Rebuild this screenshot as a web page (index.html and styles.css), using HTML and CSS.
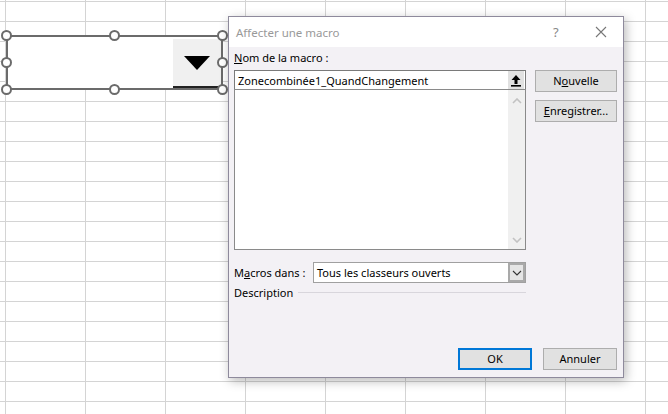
FILE: index.html
```html
<!DOCTYPE html>
<html lang="fr">
<head>
<meta charset="utf-8">
<title>Affecter une macro</title>
<link rel="stylesheet" href="styles.css">
</head>
<body>
<div class="sheet">
  <div class="shape">
    <div class="combo">
      <div class="combo-field"></div>
      <div class="combo-btn">
        <svg width="26" height="14" viewBox="0 0 26 14"><polygon points="0,0 26,0 13,14" fill="#000"/></svg>
      </div>
    </div>
    <span class="handle h-tl"></span>
    <span class="handle h-tm"></span>
    <span class="handle h-tr"></span>
    <span class="handle h-ml"></span>
    <span class="handle h-mr"></span>
    <span class="handle h-bl"></span>
    <span class="handle h-bm"></span>
    <span class="handle h-br"></span>
  </div>

  <div class="dialog">
    <div class="titlebar">
      <span class="title">Affecter une macro</span>
      <span class="help">?</span>
      <span class="close">
        <svg width="12" height="12" viewBox="0 0 12 12"><path d="M1 1L11 11M11 1L1 11" stroke="#777" stroke-width="1.1" fill="none"/></svg>
      </span>
    </div>
    <div class="body">
      <div class="main">
        <div class="left">
          <div class="lbl-name"><u>N</u>om de la macro :</div>
          <div class="name-input">
            <span class="name-text">Zonecombinée1_QuandChangement</span>
            <span class="up-btn">
              <svg width="12" height="13" viewBox="0 0 12 13"><path d="M6 1L1.5 6H4.5V10H7.5V6H10.5Z" fill="#000"/><rect x="1" y="11" width="10" height="1.6" fill="#000"/></svg>
            </span>
          </div>
          <div class="listbox">
            <div class="list-area"></div>
            <div class="scrollbar">
              <svg width="10" height="6" viewBox="0 0 10 6"><path d="M1 5L5 1L9 5" stroke="#c2c2c2" stroke-width="1.6" fill="none"/></svg>
              <svg width="10" height="6" viewBox="0 0 10 6"><path d="M1 1L5 5L9 1" stroke="#c2c2c2" stroke-width="1.6" fill="none"/></svg>
            </div>
          </div>
          <div class="macros-row">
            <span class="macros-lbl">M<u>a</u>cros dans :</span>
            <div class="select">
              <span class="select-text">Tous les classeurs ouverts</span>
              <span class="sel-btn">
                <svg width="10" height="6" viewBox="0 0 10 6"><path d="M1 1L5 5L9 1" stroke="#333" stroke-width="1.1" fill="none"/></svg>
              </span>
            </div>
          </div>
          <div class="desc-row">
            <span>Description</span>
            <span class="rule"></span>
          </div>
        </div>
        <div class="right">
          <button class="btn btn-new">N<u>o</u>uvelle</button>
          <button class="btn"><u>E</u>nregistrer...</button>
        </div>
      </div>
      <div class="footer">
        <button class="btn btn-ok">OK</button>
        <button class="btn">Annuler</button>
      </div>
    </div>
  </div>
</div>
</body>
</html>
```

FILE: styles.css
```css
html, body {
  margin: 0;
  padding: 0;
}
body {
  width: 668px;
  height: 414px;
  overflow: hidden;
  font-family: "Noto Sans", "Liberation Sans", sans-serif;
  font-size: 11px;
  color: #000;
}
.sheet {
  position: relative;
  width: 668px;
  height: 414px;
  background-color: #fff;
  background-image:
    linear-gradient(to right, #d4d4d4 1px, transparent 1px),
    linear-gradient(to bottom, #d4d4d4 1px, transparent 1px);
  background-size: 80px 20px;
  background-position: 5px 1px;
}

/* combo box shape */
.shape {
  position: absolute;
  left: 6px;
  top: 35px;
  width: 217px;
  height: 55px;
  box-sizing: border-box;
  border: 2px solid #6b6b6b;
  background: #fff;
}
.combo {
  display: flex;
  height: 100%;
}
.combo-field {
  flex: 1;
}
.combo-btn {
  width: 48px;
  margin: 2px 0 0 0;
  background: #f0f0f0;
  border-bottom: 2px solid #222;
  display: flex;
  align-items: center;
  justify-content: center;
  padding-top: 1px;
}
.handle {
  position: absolute;
  width: 11px;
  height: 11px;
  box-sizing: border-box;
  border: 2px solid #6b6b6b;
  border-radius: 50%;
  background: #fff;
}
.h-tl { left: -7px; top: -7px; }
.h-tm { left: 101px; top: -7px; }
.h-tr { right: -7px; top: -7px; }
.h-ml { left: -7px; top: 20px; }
.h-mr { right: -7px; top: 20px; }
.h-bl { left: -7px; bottom: -7px; }
.h-bm { left: 101px; bottom: -7px; }
.h-br { right: -7px; bottom: -7px; }

/* dialog */
.dialog {
  position: absolute;
  left: 228px;
  top: 16px;
  width: 396px;
  height: 362px;
  box-sizing: border-box;
  border: 1px solid #8e8a9c;
  background: #f3f1f5;
  box-shadow: 2px 3px 10px rgba(0, 0, 0, 0.28);
  display: flex;
  flex-direction: column;
}
.titlebar {
  height: 30px;
  background: #fff;
  display: flex;
  align-items: center;
  padding-left: 7px;
}
.title {
  color: #999;
  font-size: 11.5px;
  flex: 1;
}
.help {
  color: #888;
  font-size: 13px;
  width: 12px;
  margin-right: 30px;
}
.close {
  display: flex;
  width: 12px;
  margin-right: 16px;
}
.body {
  flex: 1;
  display: flex;
  flex-direction: column;
  padding: 3px 6px 7px 5px;
}
.main {
  display: flex;
  gap: 9px;
}
.left {
  width: 292px;
  display: flex;
  flex-direction: column;
}
.lbl-name {
  height: 16px;
  line-height: 16px;
  margin-bottom: 4px;
}
.name-input {
  height: 19px;
  box-sizing: border-box;
  border: 1px solid #7a7a7a;
  border-bottom: none;
  background: #fff;
  display: flex;
  align-items: center;
}
.name-text {
  flex: 1;
  padding-left: 3px;
  line-height: 17px;
}
.up-btn {
  width: 16px;
  height: 18px;
  margin-right: 1px;
  background: #e1e1e1;
  display: flex;
  align-items: center;
  justify-content: center;
}
.listbox {
  height: 161px;
  box-sizing: border-box;
  border: 1px solid #8a8a8a;
  background: #fff;
  display: flex;
}
.list-area {
  flex: 1;
}
.scrollbar {
  width: 17px;
  background: #f0f0f0;
  display: flex;
  flex-direction: column;
  justify-content: space-between;
  align-items: center;
  padding: 8px 0 6px;
}
.macros-row {
  margin-top: 12px;
  height: 21px;
  display: flex;
  align-items: center;
}
.macros-lbl {
  width: 79px;
}
.select {
  flex: 1;
  height: 21px;
  box-sizing: border-box;
  border: 1px solid #a0a0a0;
  background: #fff;
  display: flex;
  align-items: center;
}
.select-text {
  flex: 1;
  padding-left: 3px;
}
.sel-btn {
  width: 17px;
  height: 19px;
  box-sizing: border-box;
  border: 2px solid #a9a9a9;
  background: #e5e5e5;
  display: flex;
  align-items: center;
  justify-content: center;
}
.desc-row {
  margin-top: 2px;
  height: 16px;
  line-height: 16px;
  display: flex;
  align-items: center;
  gap: 5px;
}
.rule {
  flex: 1;
  height: 1px;
  background: #d8d6dc;
  margin-top: -1px;
}
.right {
  width: 82px;
  display: flex;
  flex-direction: column;
  gap: 8px;
  padding-top: 20px;
}
.btn {
  height: 22px;
  box-sizing: border-box;
  border: 1px solid #adadad;
  background: #e1e1e1;
  font-family: "Noto Sans", "Liberation Sans", sans-serif;
  font-size: 11px;
  color: #000;
  padding: 0;
  line-height: 18px;
}
.footer {
  margin-top: auto;
  display: flex;
  justify-content: flex-end;
  gap: 11px;
}
.footer .btn {
  width: 74px;
}
.btn-ok {
  border: 2px solid #0078d7;
}
```
